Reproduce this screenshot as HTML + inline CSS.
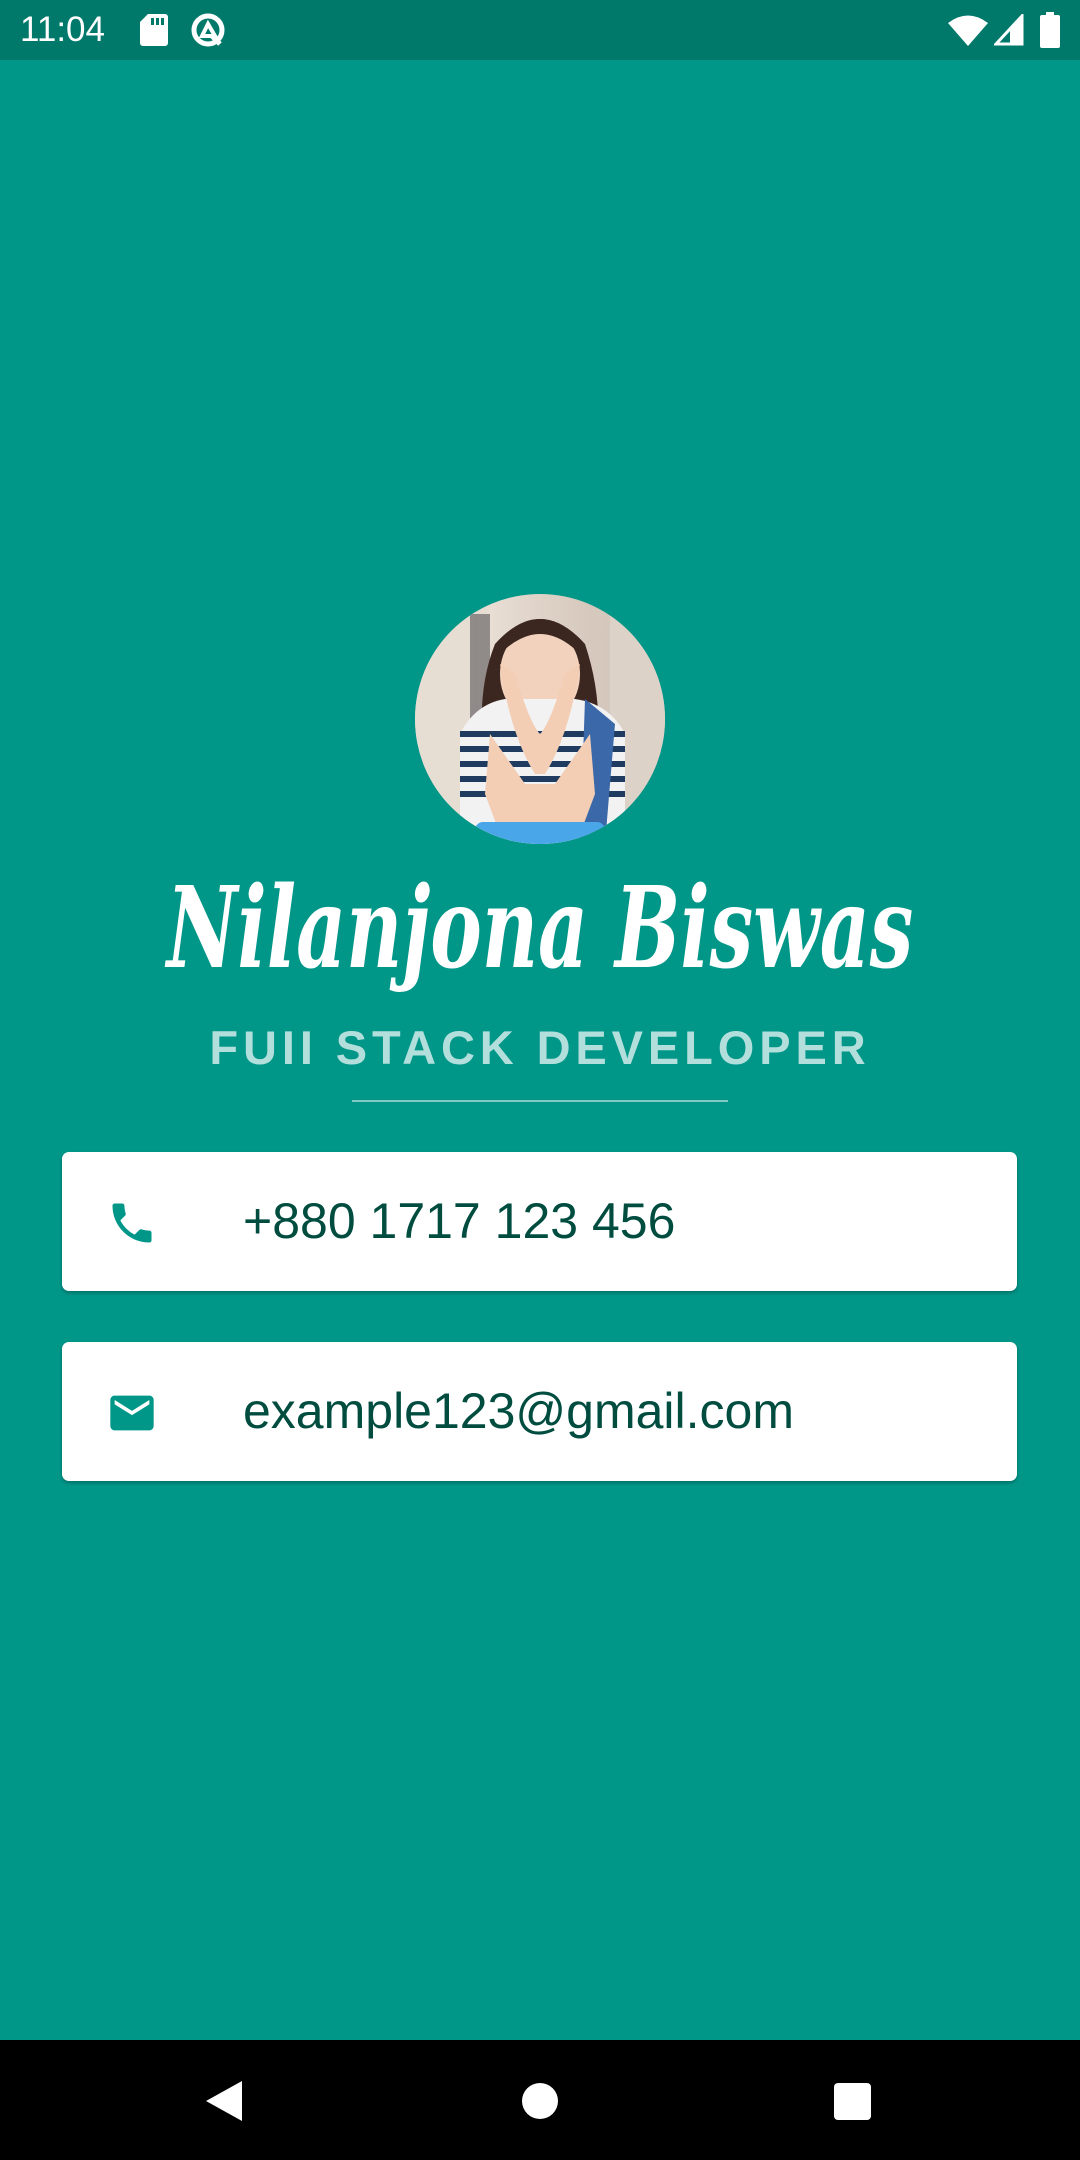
<!DOCTYPE html>
<html><head><meta charset="utf-8"><style>
*{margin:0;padding:0;box-sizing:border-box}
body{width:1080px;height:2160px;background:#009688;position:relative;overflow:hidden;font-family:"Liberation Sans",sans-serif}
.sb{position:absolute;left:0;top:0;width:1080px;height:60px;background:#00796b;color:#fff}
.nav{position:absolute;left:0;top:2040px;width:1080px;height:120px;background:#000}
.av{position:absolute;left:415px;top:594px;width:250px;height:250px;border-radius:50%;overflow:hidden;background:linear-gradient(90deg,#d9cfc6 0%,#e8ded4 30%,#d6c8bc 70%,#cfc4ba 100%)}
.name{position:absolute;left:0;top:864px;width:1080px;text-align:center;color:#fff;font-weight:bold;font-style:italic;font-size:112px;line-height:130px;font-family:"DejaVu Serif","Liberation Serif",serif;white-space:nowrap}
.name span{display:inline-block;transform:scaleX(0.69);margin:0 -200px}
.sub{position:absolute;left:0;top:1022px;width:1080px;text-align:center;color:#b2dfdb;font-weight:bold;font-size:47px;letter-spacing:4.9px;line-height:52px;white-space:nowrap}
.line{position:absolute;left:352px;top:1100px;width:376px;height:2px;background:#80cbc4}
.card{position:absolute;left:62px;width:955px;height:139px;background:#fff;border-radius:7px;box-shadow:0 2px 3px rgba(0,0,0,.25)}
.card .t{position:absolute;left:181px;top:0;line-height:139px;font-size:50px;color:#004d40}
.card svg{position:absolute;left:44px;top:45px}
</style></head><body>
<div class="sb">
<div style="position:absolute;left:20px;top:10px;font-size:35px;line-height:40px">11:04</div>
<svg style="position:absolute;left:140px;top:14px" width="28" height="32" viewBox="0 0 28 32"><path d="M8 0H25a3 3 0 0 1 3 3V29a3 3 0 0 1-3 3H3a3 3 0 0 1-3-3V8Z" fill="#fff"/><rect x="11" y="4" width="3" height="7" fill="#00796b"/><rect x="16" y="4" width="3" height="7" fill="#00796b"/><rect x="21" y="4" width="3" height="7" fill="#00796b"/></svg>
<svg style="position:absolute;left:190px;top:12px" width="36" height="36" viewBox="0 0 36 36"><circle cx="18" cy="18" r="14" fill="none" stroke="#fff" stroke-width="5"/><path d="M12 24L18 12L25 24Z" fill="none" stroke="#fff" stroke-width="4"/><path d="M22 24L30 32" stroke="#fff" stroke-width="5"/></svg>
<svg style="position:absolute;left:948px;top:14px" width="40" height="32" viewBox="0 0 40 32"><path d="M0 9Q20-6 40 9L20 32Z" fill="#fff"/></svg>
<svg style="position:absolute;left:994px;top:14px" width="30" height="32" viewBox="0 0 30 32"><path d="M28 2V30H2Z" fill="none" stroke="#fff" stroke-width="3"/><path d="M28 2V30H16V16Z" fill="#fff"/></svg>
<svg style="position:absolute;left:1040px;top:12px" width="20" height="36" viewBox="0 0 20 36"><rect x="6" y="0" width="8" height="4" fill="#fff"/><rect x="0" y="3" width="20" height="33" rx="2" fill="#fff"/></svg>
</div>
<div class="av">
<svg width="250" height="250" viewBox="0 0 250 250">
<rect x="0" y="0" width="60" height="250" fill="#e6ddd3"/>
<rect x="195" y="0" width="55" height="250" fill="#ddd2c8"/>
<rect x="55" y="20" width="20" height="200" fill="#3a3a40" opacity=".5"/>
<path d="M70 170Q60 100 80 50Q125 0 170 50Q190 110 180 170Z" fill="#3b2720"/>
<ellipse cx="125" cy="80" rx="40" ry="48" fill="#f3d2bd"/>
<path d="M85 60Q125 20 165 60L165 45Q125 5 85 45Z" fill="#3b2720"/>
<path d="M45 140Q60 110 90 105L160 105Q195 110 210 140L210 250H45Z" fill="#f2f2f2"/>
<g stroke="#1f3c60" stroke-width="6"><line x1="45" y1="140" x2="210" y2="140"/><line x1="45" y1="155" x2="210" y2="155"/><line x1="45" y1="170" x2="210" y2="170"/><line x1="45" y1="185" x2="210" y2="185"/><line x1="45" y1="200" x2="210" y2="200"/></g>
<path d="M170 105L200 130L190 250H165Z" fill="#3a68a8"/>
<path d="M85 70Q95 140 120 180L130 180Q155 140 165 70L150 80Q135 130 125 140Q115 130 100 80Z" fill="#f3cdb4"/>
<path d="M75 140L110 190L140 190L175 140L180 200L165 240H85L70 200Z" fill="#f3cdb4"/>
<rect x="60" y="228" width="130" height="30" rx="8" fill="#49a6e8"/>
</svg></div>
<div class="name"><span>Nilanjona Biswas</span></div>
<div class="sub">FUII STACK DEVELOPER</div>
<div class="line"></div>
<div class="card" style="top:1152px">
<svg width="52" height="52" viewBox="0 0 24 24"><path fill="#009688" d="M6.62 10.79c1.440 2.83 3.76 5.14 6.59 6.590l2.2-2.2c.27-.27.67-.36 1.02-.24 1.12.37 2.33.57 3.57.57.55 0 1 .45 1 1V20c0 .55-.45 1-1 1-9.39 0-17-7.61-17-17 0-.55.45-1 1-1h3.5c.55 0 1 .45 1 1 0 1.25.2 2.45.57 3.57.11.35.03.74-.25 1.02l-2.2 2.2z"/></svg>
<div class="t">+880 1717 123 456</div></div>
<div class="card" style="top:1342px">
<svg width="52" height="52" viewBox="0 0 24 24"><path fill="#009688" d="M20 4H4c-1.1 0-2 .9-2 2v12c0 1.1.9 2 2 2h16c1.1 0 2-.9 2-2V6c0-1.1-.9-2-2-2zm0 4l-8 5-8-5V6l8 5 8-5v2z"/></svg>
<div class="t">example123@gmail.com</div></div>
<div class="nav">
<svg style="position:absolute;left:206px;top:41px" width="36" height="40" viewBox="0 0 36 40"><path d="M36 0V40L0 20Z" fill="#fff"/></svg>
<div style="position:absolute;left:522px;top:43px;width:36px;height:36px;border-radius:50%;background:#fff"></div>
<div style="position:absolute;left:834px;top:43px;width:37px;height:37px;border-radius:4px;background:#fff"></div>
</div>
</body></html>
